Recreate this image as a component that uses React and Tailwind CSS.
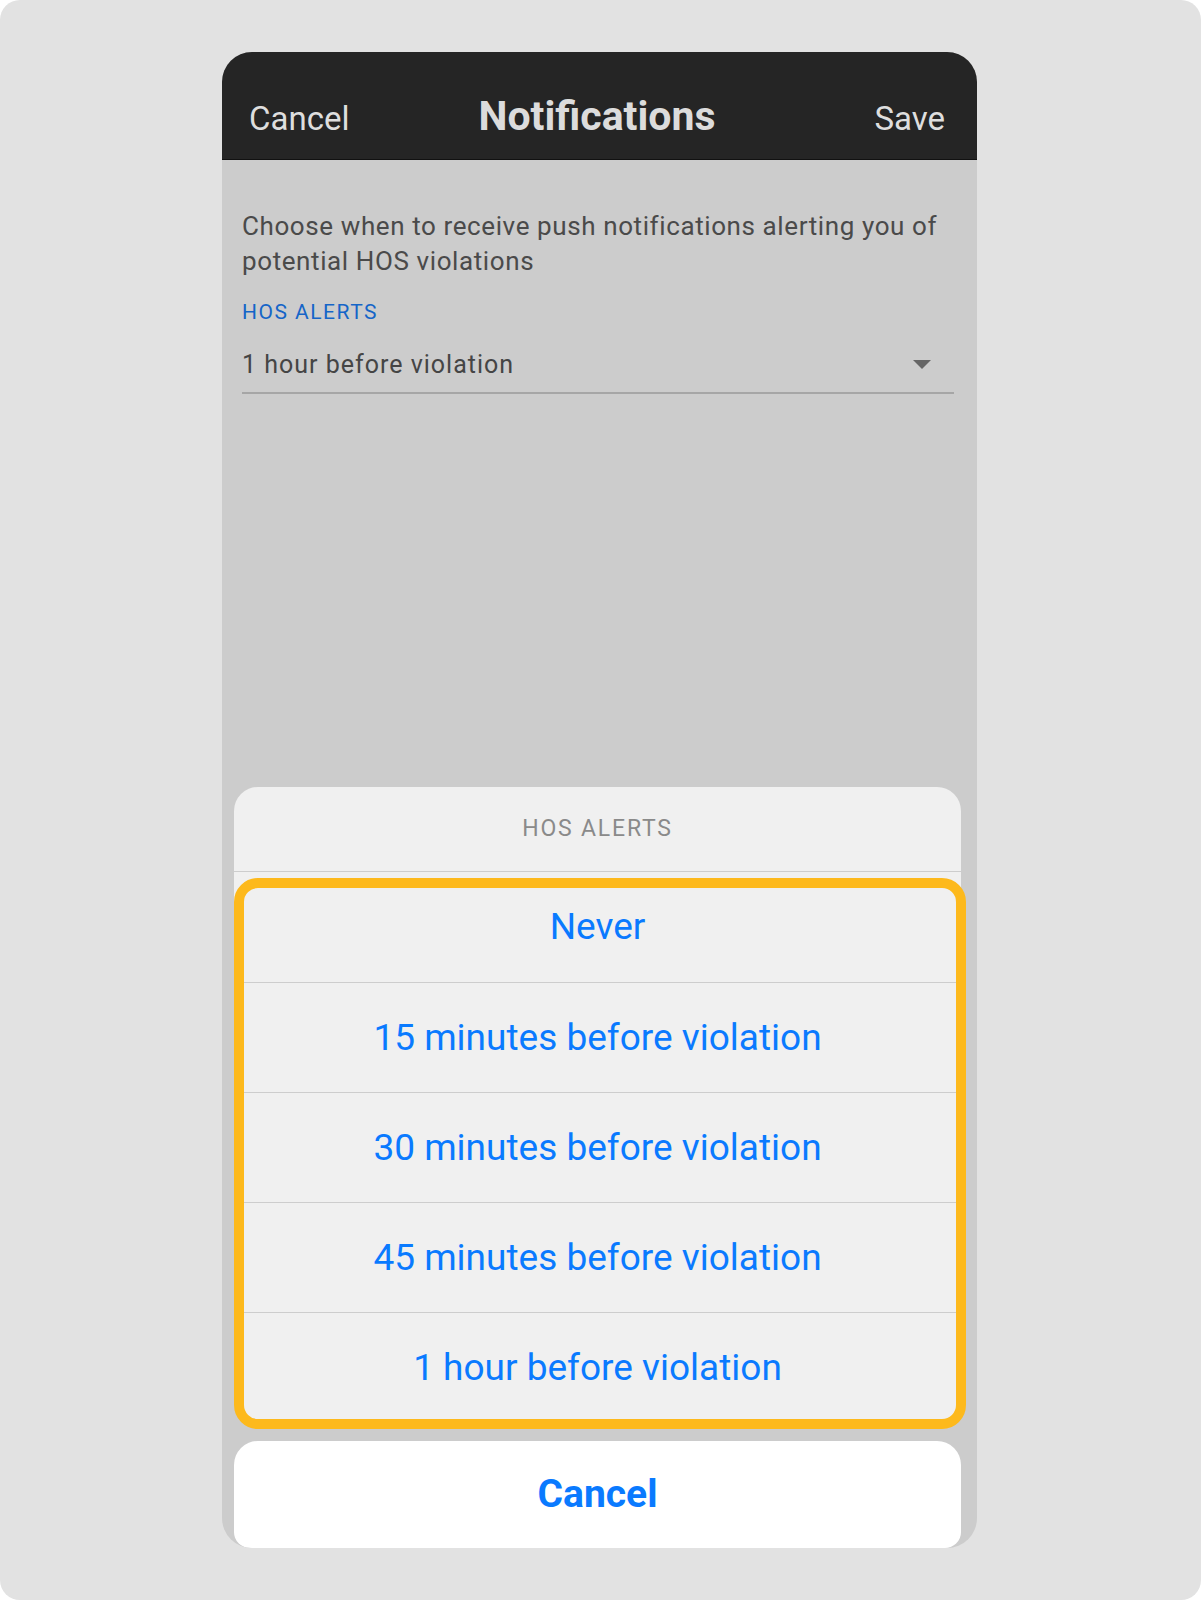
import React from "react";

const options = [
  "Never",
  "15 minutes before violation",
  "30 minutes before violation",
  "45 minutes before violation",
  "1 hour before violation",
];

const App = () => {
  return (
    <div className="w-[1201px] h-[1600px] bg-white font-['Roboto',sans-serif]">
      <div className="h-full rounded-[20px] bg-[#e2e2e2] pt-[52px] pl-[222px]">
        {/* Phone */}
        <div className="w-[755px] h-[1496px] rounded-[30px] overflow-hidden bg-[#cccccc] flex flex-col">
          {/* Header */}
          <div className="h-[108px] shrink-0 bg-[#252525] border-b border-[#111] grid grid-cols-[1fr_auto_1fr] items-baseline pt-[44px] pl-[27px] pr-[32px]">
            <span className="text-[33px] leading-none text-[#dedede]">Cancel</span>
            <span className="text-[41px] leading-none font-bold text-[#dcdcdc]">Notifications</span>
            <span className="text-[33px] leading-none text-[#dedede] text-right">Save</span>
          </div>

          {/* Body */}
          <div className="pt-[49px] pl-[20px] pr-[23px]">
            <p className="text-[26px] leading-[35px] tracking-[0.6px] text-[#4a4a4a]">
              Choose when to receive push notifications alerting you of potential HOS violations
            </p>
            <div className="mt-[23px] text-[21px] leading-none tracking-[1.5px] text-[#1565c8]">HOS ALERTS</div>
            <div className="mt-[29px] flex items-center justify-between pb-[15px] border-b-2 border-[#a6a6a6]">
              <span className="text-[25px] leading-none tracking-[1px] text-[#454545]">1 hour before violation</span>
              <svg width="18" height="9" viewBox="0 0 18 9" className="mr-[23px]">
                <path d="M0 0 H18 L9 9 Z" fill="#666666" />
              </svg>
            </div>
          </div>

          {/* Action sheet */}
          <div className="mt-auto relative ml-[12px] w-[727px]">
            <div className="rounded-[24px] bg-[#f0f0f0] overflow-hidden">
              <div className="h-[85px] flex items-center justify-center border-b border-[#cdcdcd] text-[23px] tracking-[1.8px] text-[#8a8a8a]">
                HOS ALERTS
              </div>
              {options.map((o, i) => (
                <div
                  key={o}
                  className={
                    "h-[110px] flex items-center justify-center text-[37px] text-[#0a7aff]" +
                    (i > 0 ? " border-t border-[#cdcdcd]" : "")
                  }
                >
                  {o}
                </div>
              ))}
            </div>

            {/* highlight */}
            <div className="absolute left-0 top-[91px] w-[732px] h-[551px] rounded-[24px] border-[10px] border-[#fdb91c]"></div>

            <div className="mt-[19px] h-[107px] rounded-t-[24px] rounded-b-[16px] bg-white flex items-center justify-center text-[39px] font-bold text-[#0a7aff]">
              Cancel
            </div>
          </div>
        </div>
      </div>
    </div>
  );
};

export default App;
